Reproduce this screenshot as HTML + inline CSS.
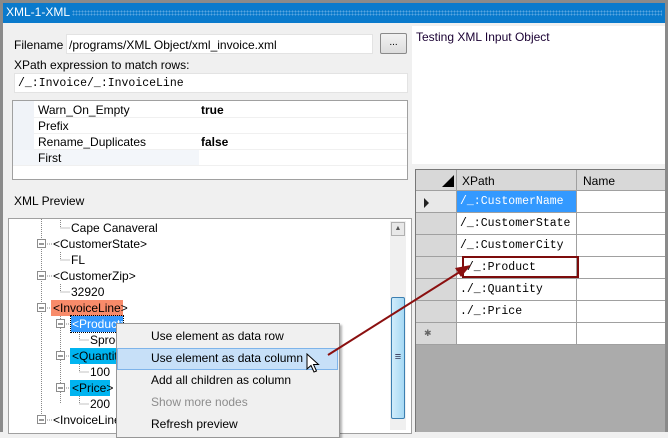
<!DOCTYPE html>
<html><head><style>
*{margin:0;padding:0;box-sizing:border-box}
body{width:668px;height:432px;overflow:hidden;background:#f0f0f0;font-family:"Liberation Sans",sans-serif;font-size:12px;color:#000;position:relative}
.a{position:absolute;white-space:nowrap}
.mono{font-family:"Liberation Mono",monospace;font-size:11.5px}
.gc{position:absolute;border-right:1px solid #a0a0a0;border-bottom:1px solid #a0a0a0;height:22px;line-height:21px;padding-left:3px}
.mn{position:absolute;white-space:nowrap;font-size:12px}
</style></head><body>
<div class="a" style="left:0;top:0;width:668px;height:3px;background:#8a8a8a"></div>
<div class="a" style="left:0;top:0;width:3px;height:432px;background:#8a8a8a"></div>
<div class="a" style="left:665px;top:0;width:3px;height:432px;background:#8a8a8a"></div>
<div class="a" style="left:3px;top:3px;width:662px;height:20px;background:#0a7acc"></div>
<div class="a" style="left:72px;top:10px;width:590px;height:6px;background-image:radial-gradient(#5aa6e0 0.8px,transparent 1px);background-size:3px 3px"></div>
<div class="a" style="left:6px;top:5px;color:#fff;font-size:12px">XML-1-XML</div>

<div class="a" style="left:14px;top:38px">Filename</div>
<div class="a" style="left:66px;top:34px;width:307px;height:20px;background:#fff;border:1px solid #e3e3e3;padding:3px 2px">/programs/XML Object/xml_invoice.xml</div>
<div class="a" style="left:380px;top:33px;width:27px;height:21px;border:1px solid #8a8a8a;border-radius:2px;background:linear-gradient(#f2f2f2,#dcdcdc);text-align:center;font-size:10px;line-height:18px">...</div>
<div class="a" style="left:14px;top:58px">XPath expression to match rows:</div>
<div class="a mono" style="left:14px;top:73px;width:394px;height:20px;background:#fff;border:1px solid #e3e3e3;padding:3px 3px">/_:Invoice/_:InvoiceLine</div>

<div class="a" style="left:12px;top:100px;width:396px;height:80px;background:#fff;border:1px solid #a0a0a0">
 <div class="a" style="left:0;top:0;width:21px;height:64px;background:#f0f3f8"></div>
 <div class="a" style="left:25px;top:2px">Warn_On_Empty</div><div class="a" style="left:188px;top:2px;font-weight:bold">true</div>
 <div class="a" style="left:21px;top:16px;width:373px;height:1px;background:#f0f0f0"></div>
 <div class="a" style="left:25px;top:18px">Prefix</div>
 <div class="a" style="left:21px;top:32px;width:373px;height:1px;background:#f0f0f0"></div>
 <div class="a" style="left:25px;top:34px">Rename_Duplicates</div><div class="a" style="left:188px;top:34px;font-weight:bold">false</div>
 <div class="a" style="left:21px;top:48px;width:373px;height:1px;background:#f0f0f0"></div>
 <div class="a" style="left:0;top:49px;width:186px;height:16px;background:#f3f6fa"></div>
 <div class="a" style="left:25px;top:50px">First</div>
 <div class="a" style="left:0;top:64px;width:394px;height:1px;background:#f0f0f0"></div>
</div>

<div class="a" style="left:14px;top:194px">XML Preview</div>
<div class="a" style="left:8px;top:218px;width:404px;height:216px;background:#fff;border:1px solid #a0a0a0"></div>
<svg class="a" style="left:0;top:0" width="668" height="432">
<g stroke="#888" stroke-dasharray="1,1" fill="none">
<path d="M41.5 219V420M60.5 220V228H70M41 244H52M60.5 252V260H70M41 276H52M60.5 284V292H70M41 308H52M60.5 316V404M60 324H70M79.5 332V340H89M60 356H70M79.5 364V372H89M60 388H70M79.5 396V404H89M41 420H52"/>
</g>
<g fill="#fff" stroke="#8c8c8c">
<rect x="37.5" y="239.5" width="8" height="8"/><rect x="37.5" y="271.5" width="8" height="8"/><rect x="37.5" y="303.5" width="8" height="8"/><rect x="56.5" y="319.5" width="8" height="8"/><rect x="56.5" y="351.5" width="8" height="8"/><rect x="56.5" y="383.5" width="8" height="8"/><rect x="37.5" y="415.5" width="8" height="8"/>
</g>
<path d="M39 244H44M39 276H44M39 308H44M58 324H63M58 356H63M58 388H63M39 420H44" stroke="#333"/>
</svg>
<div class="a" style="left:71px;top:221px">Cape Canaveral</div>
<div class="a" style="left:53px;top:237px">&lt;CustomerState&gt;</div>
<div class="a" style="left:71px;top:253px">FL</div>
<div class="a" style="left:53px;top:269px">&lt;CustomerZip&gt;</div>
<div class="a" style="left:71px;top:285px">32920</div>
<div class="a" style="left:51px;top:300px;width:72px;height:16px;background:#f88b6a;padding:1px 2px">&lt;InvoiceLine&gt;</div>
<div class="a" style="left:71px;top:316px;width:52px;height:16px;background:#3399ff;color:#fff;padding:1px 1px;outline:1px dotted #000">&lt;Product&gt;</div>
<div class="a" style="left:90px;top:333px">Sprocket</div>
<div class="a" style="left:70px;top:348px;width:60px;height:16px;background:#00b4f0;padding:1px 2px">&lt;Quantity&gt;</div>
<div class="a" style="left:90px;top:365px">100</div>
<div class="a" style="left:70px;top:380px;width:40px;height:16px;background:#00b4f0;padding:1px 2px">&lt;Price&gt;</div>
<div class="a" style="left:90px;top:397px">200</div>
<div class="a" style="left:53px;top:413px">&lt;InvoiceLine&gt;</div>

<div class="a" style="left:390px;top:221px;width:16px;height:209px;background:#f0f0f0"></div>
<div class="a" style="left:391px;top:222px;width:14px;height:14px;border:1px solid #b0b0b0;background:#e8e8e8;font-size:7px;text-align:center;line-height:12px;color:#555">▲</div>
<div class="a" style="left:391px;top:297px;width:14px;height:122px;border:1px solid #3c7fb1;border-radius:2px;background:linear-gradient(90deg,#d0ecfb,#a6d9f4);text-align:center;line-height:118px;color:#335;font-size:11px">≡</div>

<div class="a" style="left:116px;top:323px;width:224px;height:115px;background:#f0f0f0;border:1px solid #979797;box-shadow:2px 2px 2px rgba(0,0,0,.3)">
 <div class="a" style="left:0;top:24px;width:221px;height:22px;background:#c7e0f8;border:1px solid #7eb4ea"></div>
 <div class="mn" style="left:34px;top:5px">Use element as data row</div>
 <div class="mn" style="left:34px;top:27px">Use element as data column</div>
 <div class="mn" style="left:34px;top:49px">Add all children as column</div>
 <div class="mn" style="left:34px;top:71px;color:#8d8d8d">Show more nodes</div>
 <div class="mn" style="left:34px;top:93px">Refresh preview</div>
</div>
<svg class="a" style="left:306px;top:353px" width="16" height="22"><path d="M1 1V16L5 12.5L8 19L10.5 18L7.5 11.5H12.5Z" fill="#fff" stroke="#000"/></svg>

<div class="a" style="left:412px;top:26px;width:253px;height:138px;background:#fff"></div>
<div class="a" style="left:416px;top:30px;color:#1a0033">Testing XML Input Object</div>

<div class="a" style="left:415px;top:169px;width:250px;height:263px;background:#ababab;border-left:1px solid #777;border-top:1px solid #777;overflow:hidden">
 <div class="a" style="left:0;top:0;width:41px;height:21px;background:#d8d8d8;border-right:1px solid #a0a0a0;border-bottom:1px solid #a0a0a0"></div>
 <svg class="a" style="left:26px;top:5px" width="12" height="12"><path d="M12 0V12H0Z" fill="#000"/></svg>
 <div class="a" style="left:41px;top:0;width:120px;height:21px;background:#d8d8d8;border-right:1px solid #a0a0a0;border-bottom:1px solid #a0a0a0;padding:4px 5px">XPath</div>
 <div class="a" style="left:161px;top:0;width:100px;height:21px;background:#d8d8d8;border-bottom:1px solid #a0a0a0;padding:4px 6px">Name</div>
 <div class="gc" style="left:0;top:21px;width:41px;background:#e8e8e8"></div>
 <svg class="a" style="left:8px;top:28px" width="6" height="10"><path d="M0 0L5 5L0 10Z" fill="#222"/></svg>
 <div class="gc" style="left:0;top:43px;width:41px;background:#d8d8d8"></div>
 <div class="gc" style="left:0;top:65px;width:41px;background:#d8d8d8"></div>
 <div class="gc" style="left:0;top:87px;width:41px;background:#d8d8d8"></div>
 <div class="gc" style="left:0;top:109px;width:41px;background:#d8d8d8"></div>
 <div class="gc" style="left:0;top:131px;width:41px;background:#d8d8d8"></div>
 <div class="gc" style="left:0;top:153px;width:41px;background:#d8d8d8;font-size:9px;color:#666;padding-left:8px">✱</div>
 <div class="gc mono" style="left:41px;top:21px;width:120px;background:#3399ff;color:#fff">/_:CustomerName</div>
 <div class="gc mono" style="left:41px;top:43px;width:120px;background:#fff">/_:CustomerState</div>
 <div class="gc mono" style="left:41px;top:65px;width:120px;background:#fff">/_:CustomerCity</div>
 <div class="gc mono" style="left:41px;top:87px;width:120px;background:#fff">./_:Product</div>
 <div class="gc mono" style="left:41px;top:109px;width:120px;background:#fff">./_:Quantity</div>
 <div class="gc mono" style="left:41px;top:131px;width:120px;background:#fff">./_:Price</div>
 <div class="gc" style="left:41px;top:153px;width:120px;background:#fff"></div>
 <div class="gc" style="left:161px;top:21px;width:100px;background:#fff"></div>
 <div class="gc" style="left:161px;top:43px;width:100px;background:#fff"></div>
 <div class="gc" style="left:161px;top:65px;width:100px;background:#fff"></div>
 <div class="gc" style="left:161px;top:87px;width:100px;background:#fff"></div>
 <div class="gc" style="left:161px;top:109px;width:100px;background:#fff"></div>
 <div class="gc" style="left:161px;top:131px;width:100px;background:#fff"></div>
 <div class="gc" style="left:161px;top:153px;width:100px;background:#fff"></div>
</div>
<div class="a" style="left:462px;top:256px;width:117px;height:22px;border:2px solid #7d0c0c"></div>
<svg class="a" style="left:0;top:0" width="668" height="432"><path d="M328 355L466 268" stroke="#8b1010" stroke-width="2"/><path d="M471 265L455 268L461 277Z" fill="#8b1010"/></svg>
</body></html>
